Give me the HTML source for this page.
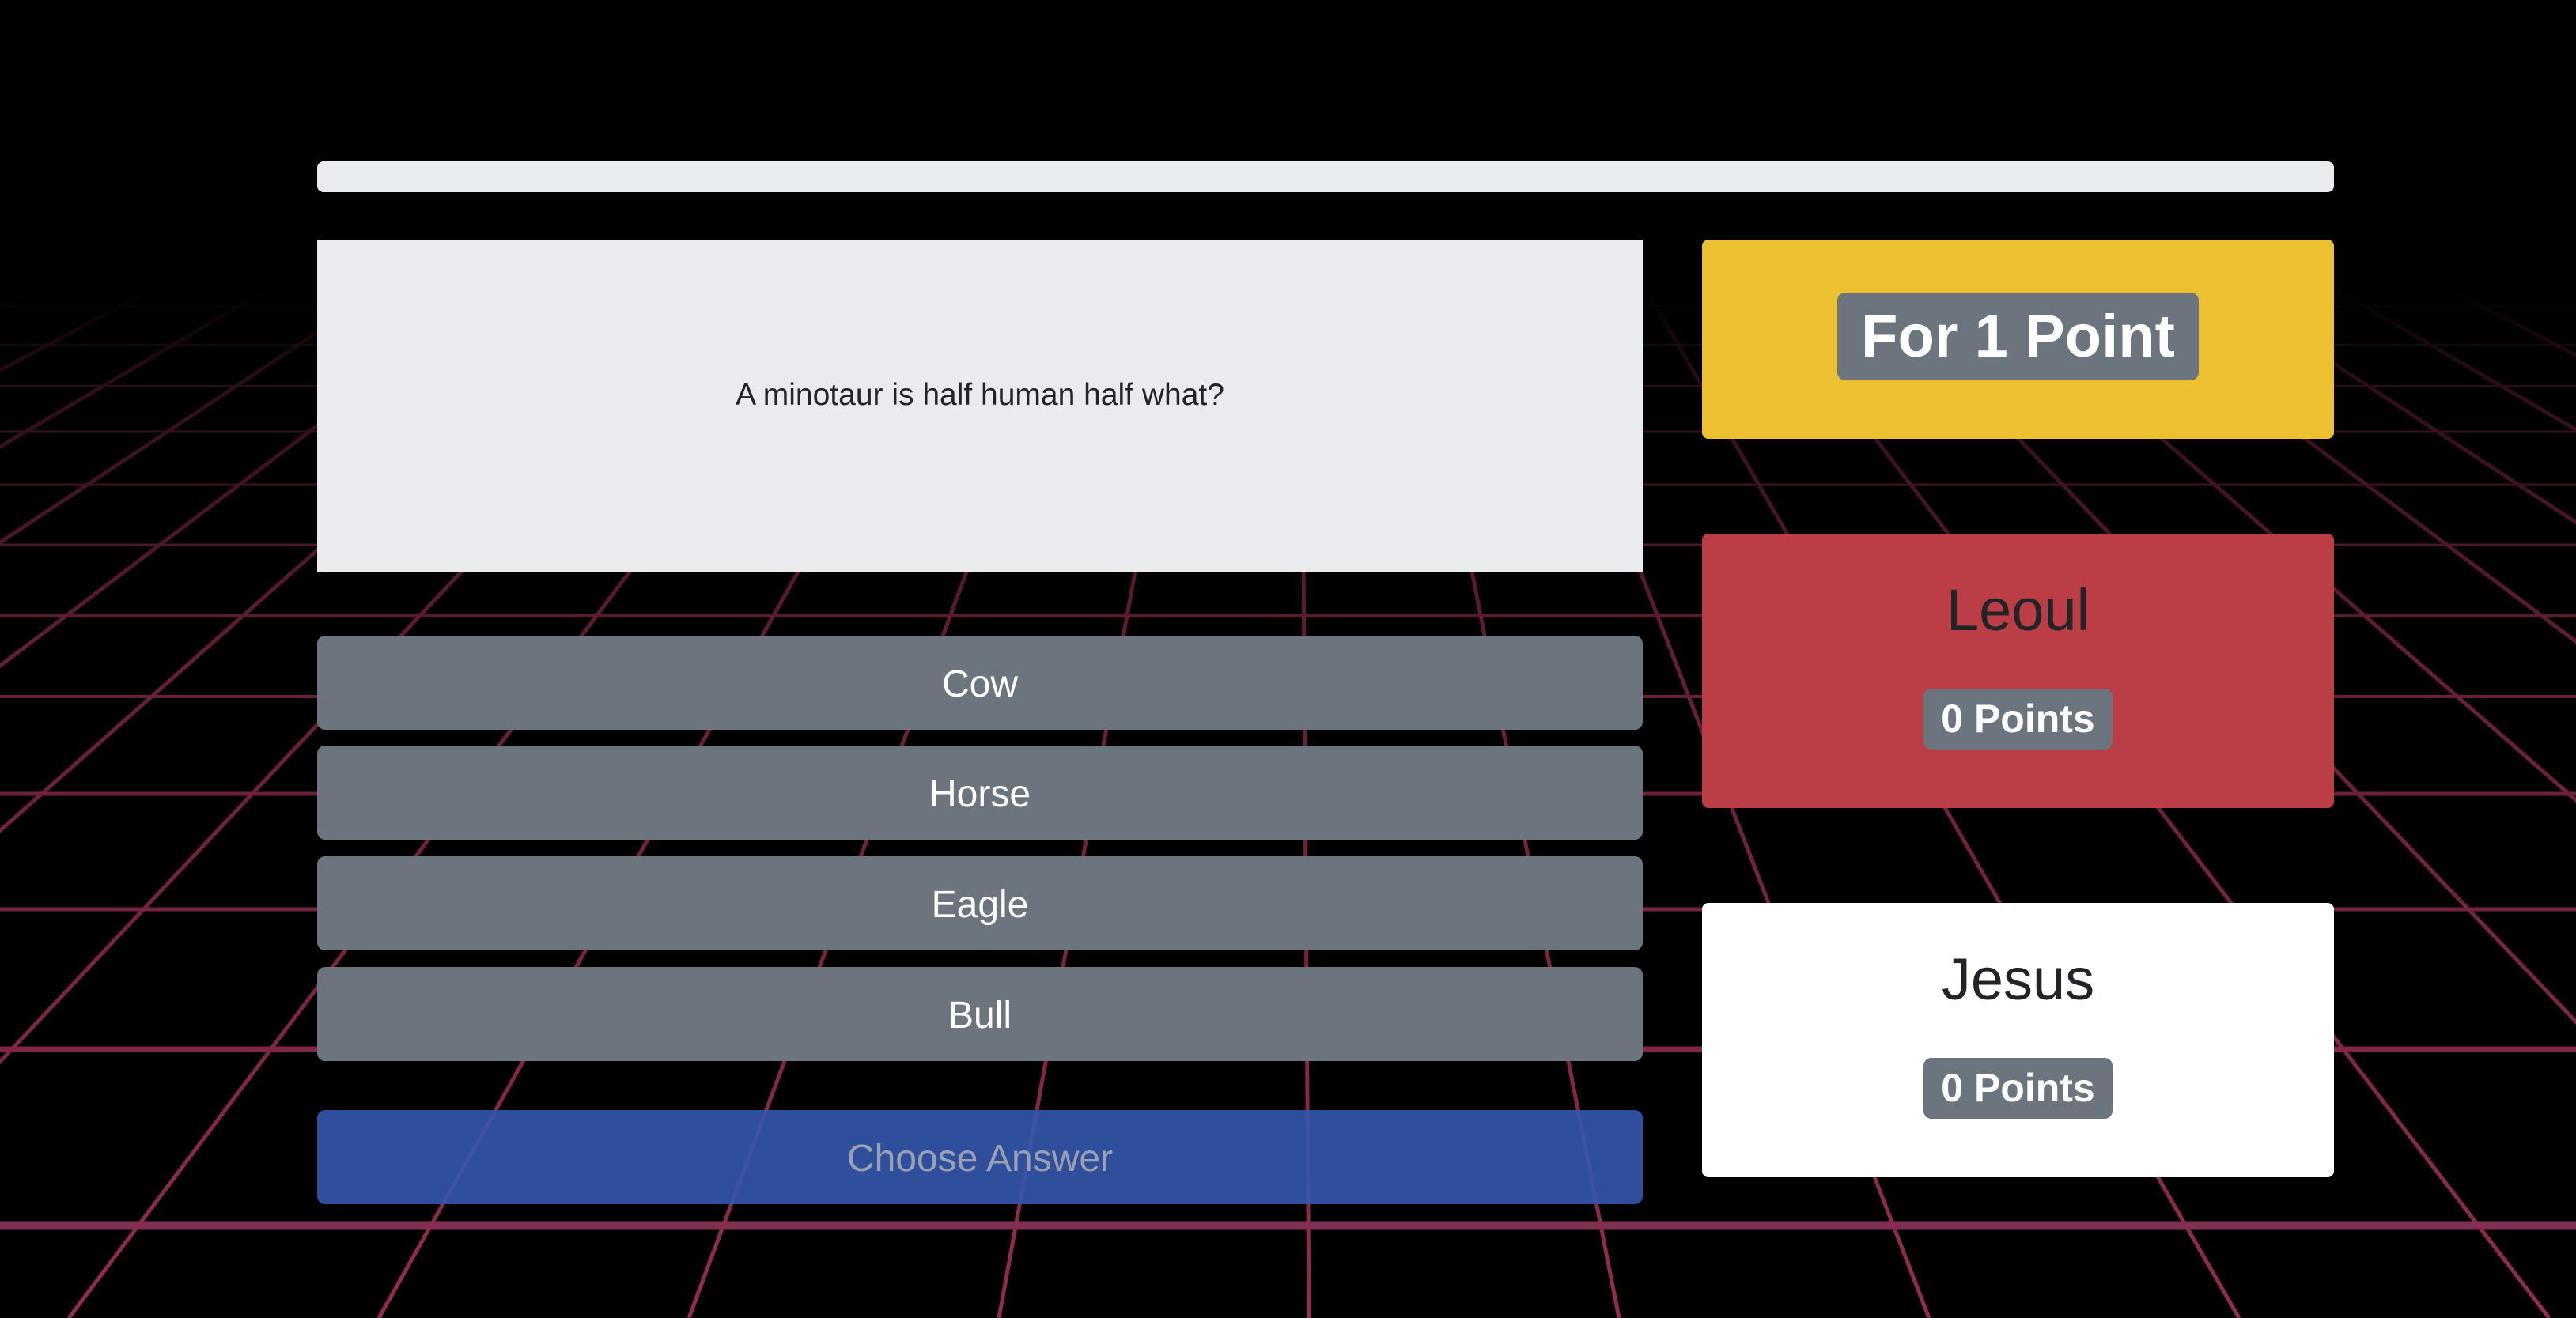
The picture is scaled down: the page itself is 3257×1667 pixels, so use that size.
<!DOCTYPE html>
<html><head><meta charset="utf-8"><style>
body{margin:0;width:3257px;height:1667px;background:#000;overflow:hidden;position:relative;font-family:"Liberation Sans",sans-serif}
.abs{position:absolute;box-sizing:border-box}
.bar{left:401px;top:204px;width:2550px;height:39px;background:#e9ecef;border-radius:8px}
.q{left:401px;top:303px;width:1676px;height:420px;background:#e9ebef;display:flex;align-items:center;justify-content:center;font-size:39px;color:#212529;padding-bottom:26px}
.btn{left:401px;width:1676px;height:119px;background:#6c757d;border-radius:10px;color:#fff;font-size:48px;display:flex;align-items:center;justify-content:center;padding-top:4px}
.card{left:2152px;width:799px;border-radius:8px;display:flex;flex-direction:column;align-items:center}
.badge{background:#6c757d;color:#fff;font-weight:bold;border-radius:10px}
</style></head><body>
<svg class="abs" style="left:0;top:0" width="3257" height="1667">
<defs>
<linearGradient id="fade" x1="0" y1="0" x2="0" y2="1667" gradientUnits="userSpaceOnUse">
<stop offset="0.22" stop-color="#000" stop-opacity="1"/>
<stop offset="0.3" stop-color="#000" stop-opacity="0.7"/>
<stop offset="0.5" stop-color="#000" stop-opacity="0.35"/>
<stop offset="1" stop-color="#000" stop-opacity="0.05"/>
</linearGradient>
</defs>
<g stroke="#9a2e58" stroke-width="4" fill="none">
<line x1="0" y1="387" x2="3257" y2="387" stroke-width="2"/>
<line x1="0" y1="436" x2="3257" y2="436" stroke-width="2"/>
<line x1="0" y1="488" x2="3257" y2="488" stroke-width="2"/>
<line x1="0" y1="546" x2="3257" y2="546" stroke-width="3"/>
<line x1="0" y1="613" x2="3257" y2="613" stroke-width="3"/>
<line x1="0" y1="689" x2="3257" y2="689" stroke-width="3"/>
<line x1="0" y1="778" x2="3257" y2="778"/>
<line x1="0" y1="881" x2="3257" y2="881"/>
<line x1="0" y1="1004" x2="3257" y2="1004" stroke-width="5"/>
<line x1="0" y1="1150" x2="3257" y2="1150" stroke-width="5"/>
<line x1="0" y1="1327" x2="3257" y2="1327" stroke-width="7"/>
<line x1="0" y1="1550" x2="3257" y2="1550" stroke-width="11" stroke="#8a3558"/>
</g>
<g stroke="#9a2e58" stroke-width="5">
<line x1="1640" y1="-400" x2="1655" y2="1667"/>
<line x1="1640" y1="-400" x2="1263" y2="1667"/><line x1="1640" y1="-400" x2="2047" y2="1667"/>
<line x1="1640" y1="-400" x2="871" y2="1667"/><line x1="1640" y1="-400" x2="2439" y2="1667"/>
<line x1="1640" y1="-400" x2="479" y2="1667"/><line x1="1640" y1="-400" x2="2831" y2="1667"/>
<line x1="1640" y1="-400" x2="87" y2="1667"/><line x1="1640" y1="-400" x2="3223" y2="1667"/>
<line x1="1640" y1="-400" x2="-305" y2="1667"/><line x1="1640" y1="-400" x2="3615" y2="1667"/>
<line x1="1640" y1="-400" x2="-697" y2="1667"/><line x1="1640" y1="-400" x2="4007" y2="1667"/>
<line x1="1640" y1="-400" x2="-1089" y2="1667"/><line x1="1640" y1="-400" x2="4399" y2="1667"/>
<line x1="1640" y1="-400" x2="-1481" y2="1667"/><line x1="1640" y1="-400" x2="4791" y2="1667"/>
<line x1="1640" y1="-400" x2="-1873" y2="1667"/><line x1="1640" y1="-400" x2="5183" y2="1667"/>
<line x1="1640" y1="-400" x2="-2265" y2="1667"/><line x1="1640" y1="-400" x2="5575" y2="1667"/>
<line x1="1640" y1="-400" x2="-2657" y2="1667"/><line x1="1640" y1="-400" x2="5967" y2="1667"/>
<line x1="1640" y1="-400" x2="-3049" y2="1667"/><line x1="1640" y1="-400" x2="6359" y2="1667"/>
<line x1="1640" y1="-400" x2="-3441" y2="1667"/><line x1="1640" y1="-400" x2="6751" y2="1667"/>
</g>
<rect x="0" y="0" width="3257" height="1667" fill="url(#fade)"/>
<rect x="0" y="0" width="3257" height="370" fill="#000"/>
</svg>
<div class="abs bar"></div>
<div class="abs q">A minotaur is half human half what?</div>
<div class="abs btn" style="top:804px">Cow</div>
<div class="abs btn" style="top:943px">Horse</div>
<div class="abs btn" style="top:1083px">Eagle</div>
<div class="abs btn" style="top:1223px">Bull</div>
<div class="abs btn" style="top:1404px;background:rgba(52,86,172,0.9);color:#9aa0b3">Choose Answer</div>
<div class="abs card" style="top:303px;height:252px;background:#ecc030;justify-content:center">
<div class="badge" style="font-size:76px;padding:8px 30px;line-height:95px;margin-bottom:8px">For 1 Point</div></div>
<div class="abs card" style="top:675px;height:347px;background:#bb3d45">
<div style="font-size:74px;color:#212529;margin-top:52px;line-height:90px">Leoul</div>
<div class="badge" style="font-size:50px;padding:12px 22px;line-height:53px;margin-top:54px">0 Points</div></div>
<div class="abs card" style="top:1142px;height:347px;background:#fff">
<div style="font-size:74px;color:#212529;margin-top:52px;line-height:90px">Jesus</div>
<div class="badge" style="font-size:50px;padding:12px 22px;line-height:53px;margin-top:54px">0 Points</div></div>
</body></html>
